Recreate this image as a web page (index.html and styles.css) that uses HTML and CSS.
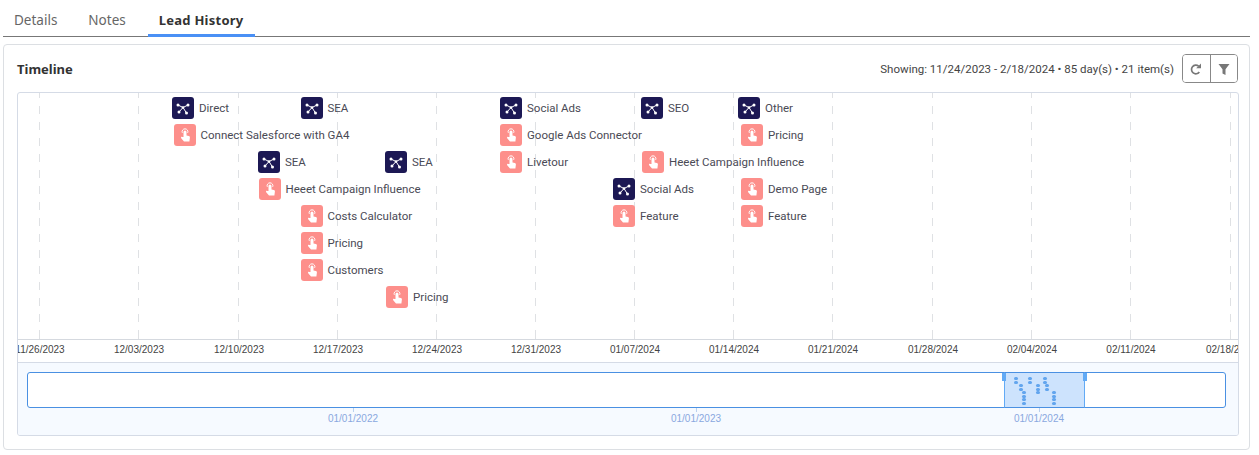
FILE: index.html
```html
<!DOCTYPE html>
<html lang="en">
<head>
<meta charset="utf-8">
<title>Lead History</title>
<link rel="stylesheet" href="styles.css">
</head>
<body>
<svg class="defs" width="0" height="0" aria-hidden="true">
  <symbol id="net" viewBox="0 0 22 22">
    <path d="M6 8L11 10.500L16 8M11 10.500L7 15M11 10.500L14.500 16" fill="none" stroke="#fff" stroke-width="1"/>
    <circle cx="6" cy="8" r="1.500" fill="#fff"/><circle cx="16" cy="8" r="1.500" fill="#fff"/>
    <circle cx="7" cy="15" r="1.500" fill="#fff"/><circle cx="14.500" cy="16" r="1.500" fill="#fff"/><circle cx="11" cy="10.500" r="1.300" fill="#fff"/>
  </symbol>
  <symbol id="tap" viewBox="0 0 22 22">
    <path d="M9.500 13V8a1.500 1.500 0 0 1 3 0V11.500l2.300.6c.8.2 1.200.8 1.100 1.500l-.5 3.900H10l-2.800-3.300c-.6-.8.300-1.700 1.100-1.200z" fill="#fff"/>
    <path d="M8.300 8.800a2.900 2.900 0 1 1 5.400 0" fill="none" stroke="#fff" stroke-width="1"/>
  </symbol>
</svg>
<nav class="tabs">
  <a class="tab">Details</a>
  <a class="tab">Notes</a>
  <a class="tab tab-active">Lead History</a>
</nav>
<section class="card">
  <header class="card-head">
    <h2 class="card-title">Timeline</h2>
    <div class="head-right">
      <span class="showing">Showing: 11/24/2023 - 2/18/2024 • 85 day(s) • 21 item(s)</span>
      <div class="btn-group">
        <button class="btn" aria-label="Refresh"><svg width="14" height="14" viewBox="0 0 14 14"><path d="M10.300 10A4.300 4.300 0 1 1 9.600 4.200" fill="none" stroke="#777" stroke-width="1.700"/><path d="M12 1.500v4.800H7.200z" fill="#777"/></svg></button>
        <button class="btn" aria-label="Filter"><svg width="14" height="14" viewBox="0 0 14 14"><path d="M1.500 2h11L8.500 7.200V13L5.500 11.500V7.200z" fill="#777"/></svg></button>
      </div>
    </div>
  </header>
  <div class="timeline">
    <div class="canvas">
      <i class="grid" style="left:21px"></i><i class="grid" style="left:120px"></i><i class="grid" style="left:220px"></i><i class="grid" style="left:319px"></i><i class="grid" style="left:418px"></i><i class="grid" style="left:517px"></i><i class="grid" style="left:616px"></i><i class="grid" style="left:715px"></i><i class="grid" style="left:814px"></i><i class="grid" style="left:914px"></i><i class="grid" style="left:1013px"></i><i class="grid" style="left:1112px"></i><i class="grid" style="left:1212px"></i>

      <div class="item" style="left:154px;top:4px"><svg class="ico net"><use href="#net"/></svg>Direct</div>
      <div class="item" style="left:282.500px;top:4px"><svg class="ico net"><use href="#net"/></svg>SEA</div>
      <div class="item" style="left:482px;top:4px"><svg class="ico net"><use href="#net"/></svg>Social Ads</div>
      <div class="item" style="left:623px;top:4px"><svg class="ico net"><use href="#net"/></svg>SEO</div>
      <div class="item" style="left:720px;top:4px"><svg class="ico net"><use href="#net"/></svg>Other</div>

      <div class="item" style="left:155.500px;top:31px"><svg class="ico tapb"><use href="#tap"/></svg>Connect Salesforce with GA4</div>
      <div class="item" style="left:482px;top:31px"><svg class="ico tapb"><use href="#tap"/></svg>Google Ads Connector</div>
      <div class="item" style="left:723px;top:31px"><svg class="ico tapb"><use href="#tap"/></svg>Pricing</div>

      <div class="item" style="left:240px;top:58px"><svg class="ico net"><use href="#net"/></svg>SEA</div>
      <div class="item" style="left:367px;top:58px"><svg class="ico net"><use href="#net"/></svg>SEA</div>
      <div class="item" style="left:482px;top:58px"><svg class="ico tapb"><use href="#tap"/></svg>Livetour</div>
      <div class="item" style="left:624px;top:58px"><svg class="ico tapb"><use href="#tap"/></svg>Heeet Campaign Influence</div>

      <div class="item" style="left:240.500px;top:85px"><svg class="ico tapb"><use href="#tap"/></svg>Heeet Campaign Influence</div>
      <div class="item" style="left:595px;top:85px"><svg class="ico net"><use href="#net"/></svg>Social Ads</div>
      <div class="item" style="left:723px;top:85px"><svg class="ico tapb"><use href="#tap"/></svg>Demo Page</div>

      <div class="item" style="left:282.500px;top:112px"><svg class="ico tapb"><use href="#tap"/></svg>Costs Calculator</div>
      <div class="item" style="left:595px;top:112px"><svg class="ico tapb"><use href="#tap"/></svg>Feature</div>
      <div class="item" style="left:723px;top:112px"><svg class="ico tapb"><use href="#tap"/></svg>Feature</div>

      <div class="item" style="left:282.500px;top:139px"><svg class="ico tapb"><use href="#tap"/></svg>Pricing</div>
      <div class="item" style="left:282.500px;top:166px"><svg class="ico tapb"><use href="#tap"/></svg>Customers</div>
      <div class="item" style="left:368px;top:193px"><svg class="ico tapb"><use href="#tap"/></svg>Pricing</div>
    </div>
    <div class="axis">
      <span class="date" style="left:22px">11/26/2023</span><span class="date" style="left:121px">12/03/2023</span><span class="date" style="left:221px">12/10/2023</span><span class="date" style="left:320px">12/17/2023</span><span class="date" style="left:419px">12/24/2023</span><span class="date" style="left:518px">12/31/2023</span><span class="date" style="left:617px">01/07/2024</span><span class="date" style="left:716px">01/14/2024</span><span class="date" style="left:815px">01/21/2024</span><span class="date" style="left:915px">01/28/2024</span><span class="date" style="left:1014px">02/04/2024</span><span class="date" style="left:1113px">02/11/2024</span><span class="date" style="left:1213px">02/18/2024</span>
    </div>
    <div class="overview">
      <div class="track">
        <div class="range">
          <i class="handle handle-l"></i><i class="handle handle-r"></i>
          <i class="dot" style="left:9px;top:4px"></i><i class="dot" style="left:9px;top:7.500px"></i>
          <i class="dot" style="left:23px;top:4px"></i><i class="dot" style="left:23px;top:7.500px"></i>
          <i class="dot" style="left:38px;top:4px"></i><i class="dot" style="left:38px;top:7.500px"></i>
          <i class="dot" style="left:14px;top:11px"></i><i class="dot" style="left:14px;top:14.500px"></i>
          <i class="dot" style="left:31px;top:11px"></i><i class="dot" style="left:31px;top:14.500px"></i><i class="dot" style="left:31px;top:18px"></i>
          <i class="dot" style="left:40px;top:11px"></i><i class="dot" style="left:40px;top:14.500px"></i>
          <i class="dot" style="left:17px;top:18px"></i><i class="dot" style="left:17px;top:21.500px"></i><i class="dot" style="left:17px;top:25px"></i><i class="dot" style="left:17px;top:28.500px"></i>
          <i class="dot" style="left:47px;top:18px"></i><i class="dot" style="left:47px;top:21.500px"></i><i class="dot" style="left:47px;top:25px"></i><i class="dot" style="left:47px;top:28.500px"></i>
        </div>
      </div>
      <div class="years">
        <span class="year" style="left:326px">01/01/2022</span>
        <span class="year" style="left:669px">01/01/2023</span>
        <span class="year" style="left:1012px">01/01/2024</span>
      </div>
    </div>
  </div>
</section>
</body>
</html>
```
FILE: styles.css
```css
* { box-sizing: border-box; }
html, body { margin: 0; padding: 0; background: #fff; }
body { width: 1259px; height: 455px; overflow: hidden; padding: 0 9px 0 3px; font-family: Roboto, "Noto Sans", sans-serif; color: #444; }
.defs { position: absolute; }
.tabs { display: flex; height: 37px; border-bottom: 1px solid #777; font-family: "Noto Sans", sans-serif; }
.tab { font-size: 13.500px; line-height: 18px; padding: 11px 11px 0; margin-right: 9px; color: #666; height: 37px; letter-spacing: 0; }
.tab-active { color: #333; font-weight: 700; border-bottom: 3px solid #4a90f5; margin: 0 0 0 2px; font-size: 13px; letter-spacing: .25px; }
.card { margin-top: 7px; height: 406px; border: 1px solid #dcdfe3; border-radius: 4px; padding: 0 12px 0 13px; }
.card-head { height: 47px; display: flex; align-items: center; justify-content: space-between; }
.card-title { margin: 0; font: 700 13px "Noto Sans", sans-serif; color: #333; }
.head-right { display: flex; align-items: center; gap: 8px; margin-right: -1px; }
.showing { font-size: 11.500px; color: #444; }
.btn-group { display: flex; width: 56px; height: 29px; border: 1px solid #888; border-radius: 4px; overflow: hidden; }
.btn { flex: 1; padding: 0; background: #fff; border: 0; display: flex; align-items: center; justify-content: center; }
.btn + .btn { border-left: 1px solid #888; }
.timeline { width: 1222px; height: 344px; border: 1px solid #d5dbe6; border-radius: 3px; overflow: hidden; }
.canvas { position: relative; height: 247px; border-bottom: 1px solid #d5d9df; }
.grid { position: absolute; top: 0; bottom: 0; width: 1px; background: linear-gradient(to bottom, #dfe1e4 50%, transparent 50%) 0 -3px / 1px 16px repeat-y; }
.grid::after { content: ""; position: absolute; left: 0; bottom: 0; width: 1px; height: 7px; background: #dfe1e4; }
.item { position: absolute; display: flex; align-items: center; gap: 5px; height: 22px; font-size: 11.500px; line-height: 22px; color: #4a4a55; white-space: nowrap; }
.ico { width: 22px; height: 22px; border-radius: 3px; flex: none; }
.net { background: #1c1854; }
.tapb { background: #fd8f8b; }
.axis { position: relative; height: 23px; border-bottom: 1px solid #d5dbe6; overflow: hidden; }
.date { position: absolute; top: 4px; transform: translateX(-50%); font: 10px/12px "Liberation Sans", Arial, sans-serif; color: #444; white-space: nowrap; }
.overview { background: #f6faff; height: 72px; padding: 9px 9px 0; }
.track { position: relative; height: 36px; width: 1199px; background: #fff; border: 1px solid #4a90e2; border-radius: 3px; }
.range { position: absolute; left: 976px; width: 81px; top: -1px; bottom: -1px; background: #cde3fd; border: 1px solid #62aaf5; border-top-color: #4a90e2; border-bottom-color: #4a90e2; }
.handle { position: absolute; top: 0; width: 4px; height: 8px; background: #62aaf5; }
.handle-l { left: -3px; }
.handle-r { right: -3px; }
.dot { position: absolute; width: 4px; height: 3px; border-radius: 1.500px; background: #62a5ee; }
.years { position: relative; height: 20px; }
.year { position: absolute; top: 5px; transform: translateX(-50%); font: 10px/12px "Liberation Sans", Arial, sans-serif; color: #8aa8e0; white-space: nowrap; }
.year::before { content: ""; position: absolute; left: 50%; top: -5px; width: 1px; height: 4px; background: #b9d0ee; }
```
